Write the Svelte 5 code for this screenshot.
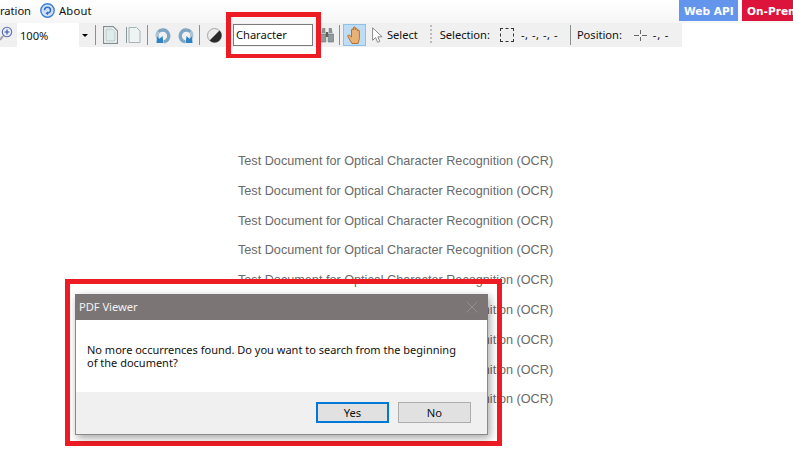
<script>
  const lines = Array.from({ length: 9 })
</script>

<div class="page">
  <header class="top">
    <div class="menu">
      <span class="cut">ration</span>
      <svg class="about-ico" width="15" height="15" viewBox="0 0 15 15">
        <circle cx="7.500" cy="7.500" r="6.700" fill="#cfe0f6" stroke="#3f7fd0" stroke-width="1.400" />
        <path d="M4.500 7.200a3 3 0 1 1 3 3" fill="none" stroke="#2f6fc4" stroke-width="1.500" />
        <path d="M8 8.200v4L5.500 10.200z" fill="#2f6fc4" />
      </svg>
      <span class="about">About</span>
    </div>
    <div class="links">
      <span class="badge api">Web API</span>
      <span class="badge prem">On-Prem</span>
    </div>
  </header>

  <div class="toolbar">
    <svg class="ic zoom-ico" width="13" height="18" viewBox="0 0 13 18">
      <path d="M3 10l-3 4" stroke="#a5a5a5" stroke-width="2" />
      <circle cx="7" cy="6" r="4.700" fill="#e8eefa" stroke="#5a6fb8" stroke-width="1.100" />
      <path d="M4.500 6h5M7 3.500v5" stroke="#3b4fa8" stroke-width="1.100" />
    </svg>
    <div class="combo">
      <span>100%</span>
      <div class="arrow"><i></i></div>
    </div>
    <div class="sep first"></div>
    <svg class="ic" width="15" height="18" viewBox="0 0 15 18">
      <path d="M.6.6h9.600l4.200 4.200v12.600H.6z" fill="#fff" stroke="#7f9090" stroke-width="1.200" />
      <path d="M3 3h6.500l2.500 2.500V15H3z" fill="#dfeaea" stroke="#b4c4c4" />
    </svg>
    <svg class="ic page2" width="15" height="18" viewBox="0 0 15 18">
      <path d="M.5 1v16" stroke="#8a9a9a" />
      <path d="M3 1.500h7.500l3.500 3.500v11.500H3z" fill="#eef3f3" stroke="#a5b5b5" />
    </svg>
    <div class="sep second"></div>
    <svg class="ic" width="16" height="17" viewBox="0 0 16 17">
      <path d="M3.200 5A6 6 0 1 1 9 14.800" fill="none" stroke="#7ea6c2" stroke-width="3.400" />
      <path d="M3.200 5A6 6 0 0 0 3 11" fill="none" stroke="#a9c4d6" stroke-width="3.400" />
      <path d="M2 9.500l2.500 2.200L7.500 9l1 7H1.500z" fill="#2d84c4" />
    </svg>
    <svg class="ic rot2" width="16" height="17" viewBox="0 0 16 17">
      <path d="M12.800 5A6 6 0 1 0 7 14.800" fill="none" stroke="#7ea6c2" stroke-width="3.400" />
      <path d="M12.800 5A6 6 0 0 1 13 11" fill="none" stroke="#a9c4d6" stroke-width="3.400" />
      <path d="M14 9.500l-2.500 2.200L8.500 9l-1 7h7z" fill="#2d84c4" />
    </svg>
    <div class="sep"></div>
    <svg class="ic" width="15" height="15" viewBox="0 0 15 15">
      <circle cx="7.500" cy="7.500" r="7" fill="#ececec" stroke="#a5a5a5" />
      <path d="M12.500 2.600a7 7 0 0 1-9.900 9.900z" fill="#2a2a2a" />
    </svg>
    <div class="search">Character</div>
    <svg class="ic" width="14" height="16" viewBox="0 0 14 16">
      <path d="M1.500 6l.8-5h3v5zM8.700 6V1h3l.8 5z" fill="#8a9292" />
      <path d="M.5 7h5.300v8H.5zM8.200 7h5.300v8H8.200z" fill="#8f9a9a" stroke="#666e6e" stroke-width=".6" />
      <path d="M5.800 5h2.400v5H5.800z" fill="#5a6363" />
    </svg>
    <div class="sep last"></div>
    <div class="hand">
      <svg width="16" height="18" viewBox="0 0 16 18">
        <path d="M5 17.500L1 10.800c-.8-1.600 1-2.400 2-1.100l1.500 1.300V4c0-1.300 1.900-1.300 1.900 0V2c0-1.400 2-1.400 2 0v1.500c0-1.300 2-1.300 2 0V5c0-1.200 2-1.200 2 0v7.500l-1.300 5z" fill="#e9b273" stroke="#a8692a" stroke-width=".9" />
      </svg>
    </div>
    <svg class="ic cursor" width="11" height="16" viewBox="0 0 11 16">
      <path d="M.6.800v12.500l3-2.700 2 4.700 2.200-1-2-4.500h4.300z" fill="#fff" stroke="#8a8a8a" />
    </svg>
    <span class="label select">Select</span>
    <div class="dots"></div>
    <span class="label">Selection:</span>
    <div class="marquee"></div>
    <span class="label values">-, -, -, -</span>
    <div class="sep pos"></div>
    <span class="label">Position:</span>
    <svg class="ic cross" width="13" height="11" viewBox="0 0 13 11">
      <path d="M0 5.500h5M8 5.500h5M6.500 0v4M6.500 7v4" stroke="#666" />
    </svg>
    <span class="label values2">-, -</span>
  </div>

  <main class="doc">
    {#each lines as _}
      <p>Test Document for Optical Character Recognition (OCR)</p>
    {/each}
  </main>

  <div class="mark search-mark"></div>
  <div class="mark dialog-mark"></div>

  <div class="dialog">
    <div class="title">
      <span class="title-text">PDF Viewer</span>
      <svg width="12" height="12" viewBox="0 0 12 12">
        <path d="M.5.500l11 11M11.500.500l-11 11" stroke="#958f8f" />
      </svg>
    </div>
    <div class="body">
      No more occurrences found. Do you want to search from the beginning of the document?
    </div>
    <div class="footer">
      <button class="primary">Yes</button>
      <button>No</button>
    </div>
  </div>
</div>

<style>
  :global(body) {
    margin: 0;
    background: #fff;
  }

  .page {
    position: relative;
    width: 793px;
    height: 453px;
    overflow: hidden;
    font-family: 'Noto Sans', 'Open Sans', sans-serif;
    font-size: 11.200px;
    letter-spacing: -0.05px;
    color: #111;
    background: #fff;
  }

  .top {
    display: flex;
    justify-content: space-between;
    height: 23px;
    background: linear-gradient(#fff, #f6f6f6);
  }

  .menu {
    display: flex;
    align-items: center;
    height: 20px;
  }

  .about-ico {
    margin: 0 4px 0 9px;
  }

  .about {
    letter-spacing: 0.2px;
  }

  .links {
    display: flex;
    gap: 4px;
    margin-right: -5px;
  }

  .badge {
    display: flex;
    align-items: center;
    height: 21px;
    box-sizing: border-box;
    padding-left: 5px;
    color: #fff;
    font-family: 'DejaVu Sans', sans-serif;
    font-weight: 700;
    font-size: 10.600px;
    letter-spacing: 0;
    white-space: nowrap;
  }

  .api {
    width: 59px;
    background: #6495ed;
  }

  .prem {
    width: 56px;
    background: #dc143c;
  }

  .toolbar {
    display: flex;
    align-items: center;
    width: 682px;
    height: 24px;
    background: #f0f0f0;
  }

  .combo {
    display: flex;
    justify-content: space-between;
    align-items: center;
    flex: none;
    width: 74px;
    height: 24px;
    margin-left: 4px;
    padding-left: 3px;
    background: #fff;
    box-sizing: border-box;
  }

  .arrow {
    display: flex;
    align-items: center;
    justify-content: center;
    width: 12px;
    height: 24px;
    background: #f0f0f0;
  }

  .arrow i {
    border: 3px solid transparent;
    border-top: 3px solid #000;
    border-bottom: 0;
  }

  .sep {
    flex: none;
    width: 1px;
    height: 20px;
    margin: 0 7px 0 5px;
    background: #8a8f8f;
  }

  .sep.first {
    margin-left: 4px;
  }

  .sep.second {
    margin-left: 6px;
  }

  .sep.last {
    margin-right: 3px;
  }

  .ic {
    flex: none;
  }

  .page2 {
    margin-left: 8px;
  }

  .rot2 {
    margin-left: 7px;
  }

  .search {
    display: flex;
    align-items: center;
    box-sizing: border-box;
    width: 80px;
    height: 22px;
    margin: 0 7px 0 11px;
    padding: 0 0 2px 2px;
    background: #fff;
    border: 1px solid #7a7a7a;
    flex: none;
  }

  .hand {
    display: flex;
    align-items: center;
    justify-content: center;
    box-sizing: border-box;
    width: 23px;
    height: 22px;
    background: #bfdcf5;
    border: 1px solid #8ec0ea;
    flex: none;
  }

  .cursor {
    margin-left: 6px;
  }

  .label {
    padding-bottom: 2px;
    white-space: nowrap;
    flex: none;
  }

  .select {
    margin-left: 4px;
  }

  .dots {
    flex: none;
    width: 2px;
    height: 20px;
    margin: 0 8px 0 12px;
    background: repeating-linear-gradient(#bbb 0 2px, transparent 2px 4px);
  }

  .marquee {
    flex: none;
    box-sizing: border-box;
    width: 14px;
    height: 14px;
    margin-left: 10px;
    border: 1px dashed #333;
  }

  .values {
    margin-left: 7px;
    width: 36px;
    letter-spacing: 0.5px;
  }

  .sep.pos {
    margin: 0 6px 0 13px;
  }

  .cross {
    margin-left: 12px;
  }

  .values2 {
    margin-left: 6px;
    letter-spacing: 0.8px;
  }

  .doc {
    padding: 105px 0 0 238px;
  }

  .doc p {
    margin: 0;
    height: 29.800px;
    line-height: 18px;
    font-family: 'Liberation Sans', Arial, sans-serif;
    font-size: 12.660px;
    letter-spacing: 0;
    color: #6a6a6a;
    white-space: nowrap;
  }

  .mark {
    position: absolute;
    box-sizing: border-box;
    border: 5px solid #ed1c24;
  }

  .search-mark {
    left: 226px;
    top: 12px;
    width: 95px;
    height: 46px;
    border-bottom-width: 4px;
    pointer-events: none;
  }

  .dialog-mark {
    left: 65px;
    top: 279px;
    width: 437px;
    height: 167px;
  }

  .dialog {
    position: absolute;
    left: 75px;
    top: 294px;
    display: flex;
    flex-direction: column;
    box-sizing: border-box;
    width: 413px;
    height: 141px;
    border: 1px solid #8a8a8a;
    border-top: 0;
    background: #fff;
    box-shadow: 2px 3px 8px rgba(0, 0, 0, 0.35);
  }

  .title {
    display: flex;
    justify-content: space-between;
    align-items: center;
    height: 26px;
    margin: 0 -1px;
    padding: 0 10px 0 4px;
    background: #7c7575;
    color: #f2f2f2;
    flex: none;
  }

  .title-text {
    padding-bottom: 2px;
  }

  .body {
    flex: 1;
    padding: 23px 24px 0 11px;
    line-height: 13px;
    font-size: 11px;
    letter-spacing: 0;
  }

  .footer {
    display: flex;
    justify-content: flex-end;
    gap: 9px;
    height: 42px;
    padding: 10px 16px 0 0;
    box-sizing: border-box;
    background: #f0f0f0;
  }

  button {
    box-sizing: border-box;
    width: 73px;
    height: 21px;
    padding: 0;
    font: inherit;
    font-size: 11.200px;
    color: #111;
    background: #e1e1e1;
    border: 1px solid #adadad;
  }

  .primary {
    border: 2px solid #0078d7;
  }
</style>
